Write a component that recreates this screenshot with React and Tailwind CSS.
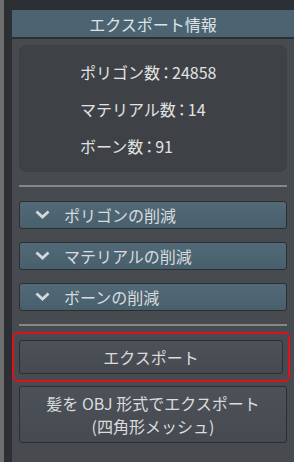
const font = { fontFamily: '"Noto Sans CJK JP", "Noto Sans", sans-serif' };

function Chevron() {
  return (
    <svg width="15" height="10" viewBox="0 0 15 10" className="shrink-0">
      <path d="M2.5 2.5 L7.5 7 L12.5 2.5" fill="none" stroke="#d4d8db" strokeWidth="2.8" strokeLinecap="square" />
    </svg>
  );
}

function Collapse({ label }) {
  return (
    <button className="flex h-[28px] w-full items-center gap-[14px] rounded-[3px] border border-[#2a2f33] bg-gradient-to-b from-[#526a78] to-[#485f6c] pl-[15px] text-[16px] text-[#d8dcdf]">
      <Chevron />
      <span>{label}</span>
    </button>
  );
}

// proportional glyph for the full-width colon, as in the reference
function Colon() {
  return <span className="mx-[2px] [font-feature-settings:'palt']">：</span>;
}

export default function App() {
  return (
    <div className="flex h-[462px] w-[294px] bg-[#2c3035] text-[#dcdcdc]" style={font}>
      <div className="w-[4px] shrink-0 bg-[#6e6e6e]" />
      <div className="w-[8px] shrink-0 bg-[#2c3035]" />
      <div className="flex flex-1 flex-col pt-[10px]">
        <div className="flex h-[27px] items-center justify-center bg-[#4c6471] text-[16px] text-[#dde2e5]">
          エクスポート情報
        </div>
        <div className="h-[2px] bg-[#2c3035]" />
        <div className="flex flex-1 flex-col bg-[#474b50] px-[7px] pt-[6px]">
          <div className="flex h-[127px] flex-col justify-center gap-[15px] rounded-[7px] bg-[#3e4246] pl-[61px] text-[16px] leading-[22px] text-[#e2e2e2]">
            <div>ポリゴン数<Colon />24858</div>
            <div>マテリアル数<Colon />14</div>
            <div>ボーン数<Colon />91</div>
          </div>
          <div className="mt-[13px] h-[2px] bg-[#858789]" />
          <div className="mt-[14px] flex flex-col gap-[13px]">
            <Collapse label="ポリゴンの削減" />
            <Collapse label="マテリアルの削減" />
            <Collapse label="ボーンの削減" />
          </div>
          <div className="mt-[13px] h-[2px] bg-[#858789]" />
          <div className="-mx-[7px] mt-[6px] mr-[-3px] rounded-[6px] border-2 border-[#e0101a] px-[5px] py-[6px]">
            <button className="flex h-[34px] w-full items-center justify-center rounded-[3px] border border-[#2a2f33] bg-gradient-to-b from-[#4d5258] to-[#464a50] text-[16px] text-[#dadcde]">
              エクスポート
            </button>
          </div>
          <button className="mt-[4px] flex h-[57px] w-full flex-col items-center justify-center rounded-[3px] border border-[#2a2f33] bg-gradient-to-b from-[#4d5258] to-[#464a50] text-[16px] leading-[23px] text-[#dadcde]">
            <span>髪を OBJ 形式でエクスポート</span>
            <span>(四角形メッシュ)</span>
          </button>
        </div>
      </div>
    </div>
  );
}
